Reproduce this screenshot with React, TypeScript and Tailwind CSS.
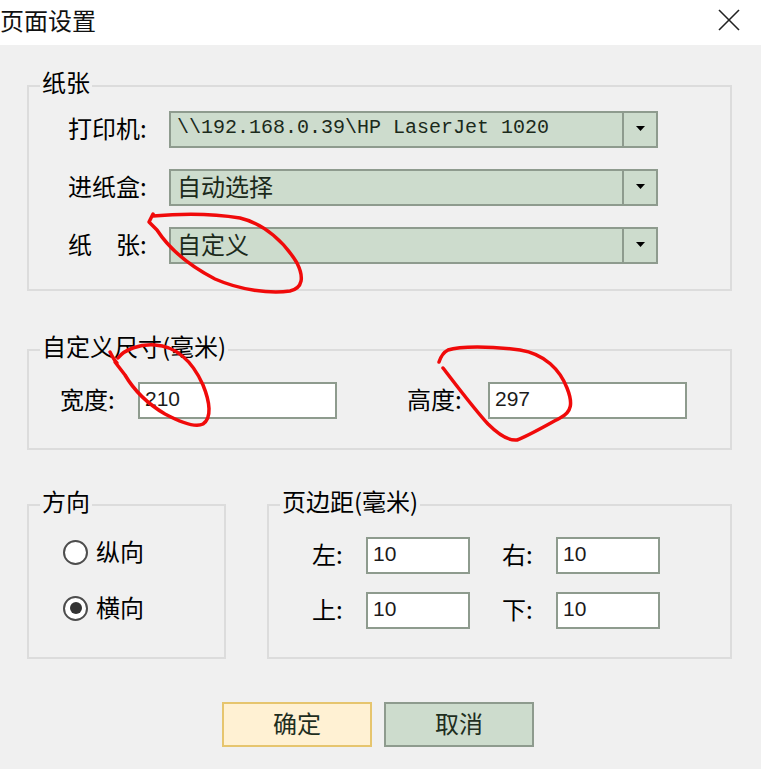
import React from "react";

const font = { fontFamily: "'Noto Sans CJK SC', 'Noto Sans', sans-serif" };

function Combo({ text, mono }: { text: string; mono?: boolean }) {
  return (
    <div className="w-[489px] h-[37px] border-2 border-[#8e9b8e] bg-[#cddccd] flex">
      <div className="flex-1 flex items-center pl-[6px] pb-[3px] whitespace-nowrap">
        {mono ? (
          <span className="text-[20px] text-[#1b2a1b]" style={{ fontFamily: "'Liberation Mono', monospace" }}>
            {text}
          </span>
        ) : (
          <span className="text-[24px] leading-[28px] text-[#1b2a1b]">{text}</span>
        )}
      </div>
      <div className="w-[34px] border-l-2 border-[#8e9b8e] flex items-center justify-center">
        <svg width="9" height="5" viewBox="0 0 9 5" className="mb-[3px]">
          <polygon points="0,0 9,0 4.5,5" fill="#000" />
        </svg>
      </div>
    </div>
  );
}

function NumInput({ value, w }: { value: string; w: string }) {
  return (
    <div className={`${w} h-[37px] border-2 border-[#8e9b8e] bg-white flex items-center pl-[5px] pb-[3px]`}>
      <span className="text-[21px] text-[#1b1b1b]" style={{ fontFamily: "'Liberation Sans', sans-serif" }}>
        {value}
      </span>
    </div>
  );
}

function Radio({ checked, label }: { checked?: boolean; label: string }) {
  return (
    <div className="flex items-center h-[28px]">
      <div className="w-[25px] h-[25px] rounded-full border-2 border-[#4d4d4d] bg-white flex items-center justify-center">
        {checked && <div className="w-[12px] h-[12px] rounded-full bg-[#333]" />}
      </div>
      <span className="ml-[8px] pb-[3px] text-[24px] leading-[28px] text-black">{label}</span>
    </div>
  );
}

function Label({ text, w }: { text: string; w: string }) {
  return <div className={`${w} pb-[3px] text-[24px] leading-[28px]`}>{text}</div>;
}

function Legend({ text }: { text: string }) {
  return <legend className="ml-[11px] px-[2px] pb-[8px] text-[24px] leading-[24px]">{text}</legend>;
}

export default function App() {
  return (
    <div className="relative w-[761px] h-[769px] bg-[#f0f0f0] overflow-hidden text-black" style={font}>
      {/* title bar */}
      <div className="h-[45px] bg-white flex items-start justify-between">
        <div className="text-[24px] leading-[28px] mt-[6px] text-[#111]">页面设置</div>
        <svg width="22" height="22" viewBox="0 0 22 22" className="mt-[9px] mr-[21px]">
          <line x1="1" y1="1" x2="21" y2="21" stroke="#222" strokeWidth="1.6" />
          <line x1="21" y1="1" x2="1" y2="21" stroke="#222" strokeWidth="1.6" />
        </svg>
      </div>

      <div className="pl-[27px] pr-[29px]">
        {/* 纸张 */}
        <fieldset className="mt-[25px] border-2 border-[#dcdcdc] pb-[25px]">
          <Legend text="纸张" />
          <div className="pl-[39px] pt-[9px] flex flex-col gap-[21px]">
            <div className="flex items-center">
              <Label w="w-[101px]" text="打印机:" />
              <Combo text="\\192.168.0.39\HP LaserJet 1020" mono />
            </div>
            <div className="flex items-center">
              <Label w="w-[101px]" text="进纸盒:" />
              <Combo text="自动选择" />
            </div>
            <div className="flex items-center">
              <Label w="w-[101px]" text="纸　张:" />
              <Combo text="自定义" />
            </div>
          </div>
        </fieldset>

        {/* 自定义尺寸 */}
        <fieldset className="mt-[43px] border-2 border-[#dcdcdc] pb-[29px]">
          <Legend text="自定义尺寸(毫米)" />
          <div className="pl-[31px] pt-[16px] flex items-center">
            <Label w="w-[78px]" text="宽度:" />
            <NumInput value="210" w="w-[199px]" />
            <Label w="ml-[70px] w-[81px]" text="高度:" />
            <NumInput value="297" w="w-[199px]" />
          </div>
        </fieldset>

        {/* 方向 / 页边距 */}
        <div className="mt-[39px] flex gap-[41px]">
          <fieldset className="w-[199px] h-[170px] border-2 border-[#dcdcdc]">
            <Legend text="方向" />
            <div className="pl-[34px] pt-[17px] flex flex-col gap-[28px]">
              <Radio label="纵向" />
              <Radio label="横向" checked />
            </div>
          </fieldset>
          <fieldset className="w-[465px] h-[170px] border-2 border-[#dcdcdc]">
            <Legend text="页边距(毫米)" />
            <div className="pl-[43px] pt-[16px] flex flex-col gap-[18px]">
              <div className="flex items-center">
                <Label w="w-[54px]" text="左:" />
                <NumInput value="10" w="w-[104px]" />
                <Label w="ml-[32px] w-[54px]" text="右:" />
                <NumInput value="10" w="w-[104px]" />
              </div>
              <div className="flex items-center">
                <Label w="w-[54px]" text="上:" />
                <NumInput value="10" w="w-[104px]" />
                <Label w="ml-[32px] w-[54px]" text="下:" />
                <NumInput value="10" w="w-[104px]" />
              </div>
            </div>
          </fieldset>
        </div>

        {/* buttons */}
        <div className="mt-[43px] ml-[195px] flex gap-[12px]">
          <button className="w-[150px] h-[45px] pb-[3px] border-2 border-[#e6c56e] bg-[#fff1d3] text-[24px] leading-[28px] text-[#1e2e1e]">
            确定
          </button>
          <button className="w-[150px] h-[45px] pb-[3px] border-2 border-[#8e9b8e] bg-[#cddccd] text-[24px] leading-[28px] text-[#1e2e1e]">
            取消
          </button>
        </div>
      </div>

      {/* red hand-drawn annotations */}
      <svg
        className="absolute left-0 top-0 pointer-events-none"
        width="761"
        height="769"
        viewBox="0 0 761 769"
        fill="none"
        stroke="#f00a0a"
        strokeWidth="3.5"
        strokeLinecap="round"
        strokeLinejoin="round"
      >
        <path d="M153 216 C175 214 210 213 240 218 C265 224 285 243 297 263 C304 277 303 288 290 291 C270 294 240 290 215 279 C190 266 170 250 157 230 L149 222 L153 214" />
        <path d="M110 352 C112 356 114 360 117 363 M118 358 C125 349 140 344 155 345 C175 346 192 360 203 385 C210 402 212 418 203 424 C195 428 180 422 165 414 C148 404 135 392 125 375 L115 362" />
        <path d="M439 362 C441 356 444 352 448 350 C460 346 490 346 520 350 C545 354 560 370 567 388 C573 403 572 412 560 418 C545 426 528 436 517 440 C508 441 498 434 488 424 C475 410 460 390 443 368" />
      </svg>
    </div>
  );
}
